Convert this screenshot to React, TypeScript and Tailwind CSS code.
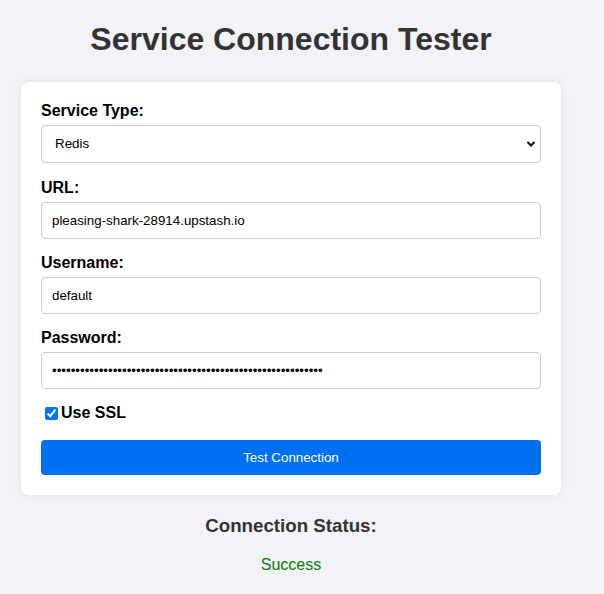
import React, { useState } from 'react'

const font = { fontFamily: '"Liberation Sans", Arial, sans-serif' }

const Field: React.FC<{ label: string; className?: string; children: React.ReactNode }> = ({ label, className, children }) => (
  <div className={className ?? 'mb-[15px]'}>
    <label className="block mb-[5px] text-[16px] leading-[18px] font-bold text-black">{label}</label>
    {children}
  </div>
)

const inputCls =
  'block w-full h-[37px] px-[10px] border border-[#ccc] rounded-[4px] bg-white text-[13.33px] text-black outline-none'

export default function App() {
  const [ssl, setSsl] = useState(true)
  const [url, setUrl] = useState('pleasing-shark-28914.upstash.io')
  const [user, setUser] = useState('default')
  const password = '•'.repeat(58)

  return (
    <div className="min-h-[594px] bg-[#f2f2f7] pt-[21px]" style={font}>
      <div className="w-[540px] ml-[21px]">
        <h1 className="text-center text-[32px] leading-[37px] font-bold text-[#333] mb-[24px]">
          Service Connection Tester
        </h1>

        <div className="bg-white rounded-[8px] p-[20px] shadow-[0_0_10px_rgba(0,0,0,0.08)]">
          <Field label="Service Type:" className="mb-[16px]">
            <div className="relative">
              <select className="block w-full h-[38px] pl-[13px] pr-[30px] border border-[#ccc] rounded-[4px] bg-white text-[13.33px] text-black appearance-none outline-none">
                <option>Redis</option>
                <option>PostgreSQL</option>
                <option>MongoDB</option>
              </select>
              <svg className="absolute right-[5px] top-[15px] pointer-events-none" width="10" height="8" viewBox="0 0 10 8">
                <path d="M1.5 2 L5 5.5 L8.5 2" fill="none" stroke="#111" strokeWidth="2" />
              </svg>
            </div>
          </Field>

          <Field label="URL:">
            <input className={inputCls} value={url} onChange={e => setUrl(e.target.value)} />
          </Field>

          <Field label="Username:">
            <input className={inputCls} value={user} onChange={e => setUser(e.target.value)} />
          </Field>

          <Field label="Password:">
            <input className={inputCls} value={password} readOnly />
          </Field>

          <label className="flex items-center h-[18px] mb-[18px] text-[16px] font-bold text-black">
            <input
              type="checkbox"
              checked={ssl}
              onChange={e => setSsl(e.target.checked)}
              className="w-[13px] h-[13px] ml-[4px] mr-[3px] accent-[#0075ff]"
            />
            Use SSL
          </label>

          <button className="block w-full h-[35px] rounded-[4px] bg-[#0070f3] text-white text-[13.33px]">
            Test Connection
          </button>
        </div>

        <h3 className="text-center text-[18.72px] leading-[21px] font-bold text-[#333] mt-[20px]">
          Connection Status:
        </h3>
        <p className="text-center text-[16px] leading-[18px] text-[#008000] mt-[20px]">Success</p>
      </div>
    </div>
  )
}
